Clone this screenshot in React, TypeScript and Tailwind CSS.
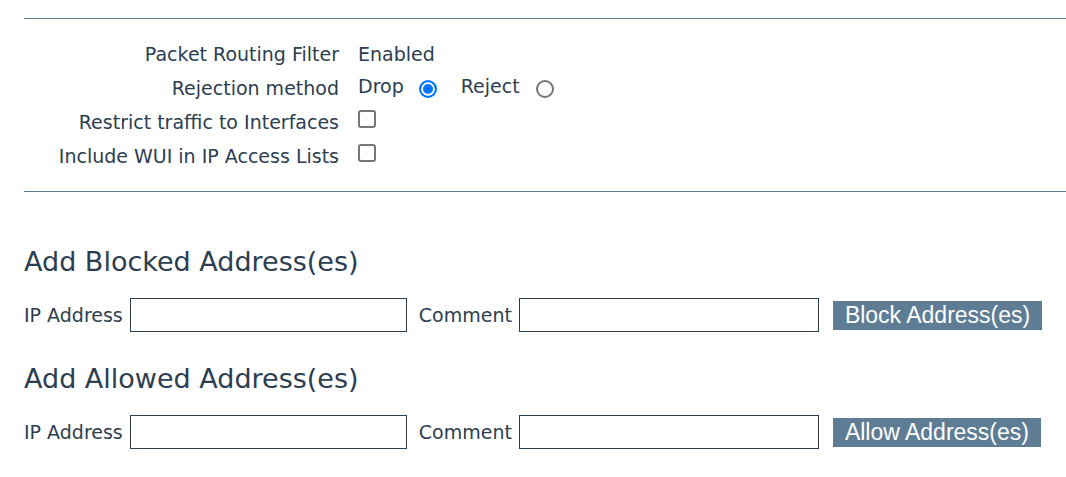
import React from 'react';

const font = { fontFamily: '"DejaVu Sans", "Noto Sans", sans-serif' };

const radioCls =
  'appearance-none w-[18px] h-[18px] rounded-full border-2 border-[#767676] bg-white checked:border-[#0075ff] checked:bg-[#0075ff] checked:shadow-[inset_0_0_0_2px_#ffffff]';
const checkCls = 'appearance-none w-[18px] h-[18px] rounded-[3px] border-2 border-[#767676] bg-white';

function Field({ label, children }: { label: string; children: React.ReactNode }) {
  return (
    <>
      <div className="text-right text-[19px] leading-[34px] text-[#2c3e50]">{label}</div>
      <div className="flex items-center h-[34px] text-[19px] text-[#2c3e50]">{children}</div>
    </>
  );
}

function AddressForm({ title, button }: { title: string; button: string }) {
  return (
    <div>
      <h2 className="text-[27px] leading-[32px] text-[#2c3e50]">{title}</h2>
      <div className="flex items-center mt-[20px]">
        <label className="text-[19px] text-[#2c3e50] mr-[7px]">IP Address</label>
        <input type="text" className="w-[277px] h-[34px] border border-[#2c3e50] bg-white outline-none" />
        <label className="text-[19px] text-[#2c3e50] ml-[12px] mr-[7px]">Comment</label>
        <input type="text" className="w-[300px] h-[34px] border border-[#2c3e50] bg-white outline-none" />
        <button
          className="ml-[14px] h-[29px] px-[12px] bg-[#5e7d95] text-white text-[23px] leading-[29px]"
          style={{ fontFamily: '"Liberation Sans", Arial, sans-serif' }}
        >
          {button}
        </button>
      </div>
    </div>
  );
}

export default function App() {
  return (
    <div className="bg-white w-[1066px] h-[477px] pl-6 pt-[18px]" style={font}>
      <div className="border-t border-[#5a7d94] border-b pt-[18px] pb-[18px]">
        <div className="grid grid-cols-[315px_1fr] gap-x-[19px]">
          <Field label="Packet Routing Filter">Enabled</Field>
          <Field label="Rejection method">
            <span className="-mt-[4px]">Drop</span>
            <input type="radio" name="rej" defaultChecked className={`ml-[15px] mt-[2px] ${radioCls}`} />
            <span className="ml-[24px] -mt-[4px]">Reject</span>
            <input type="radio" name="rej" className={`ml-[16px] mt-[2px] ${radioCls}`} />
          </Field>
          <Field label="Restrict traffic to Interfaces">
            <input type="checkbox" className={`-mt-[6px] ${checkCls}`} />
          </Field>
          <Field label="Include WUI in IP Access Lists">
            <input type="checkbox" className={`-mt-[6px] ${checkCls}`} />
          </Field>
        </div>
      </div>
      <div className="mt-[54px]">
        <AddressForm title="Add Blocked Address(es)" button="Block Address(es)" />
      </div>
      <div className="mt-[31px]">
        <AddressForm title="Add Allowed Address(es)" button="Allow Address(es)" />
      </div>
    </div>
  );
}
